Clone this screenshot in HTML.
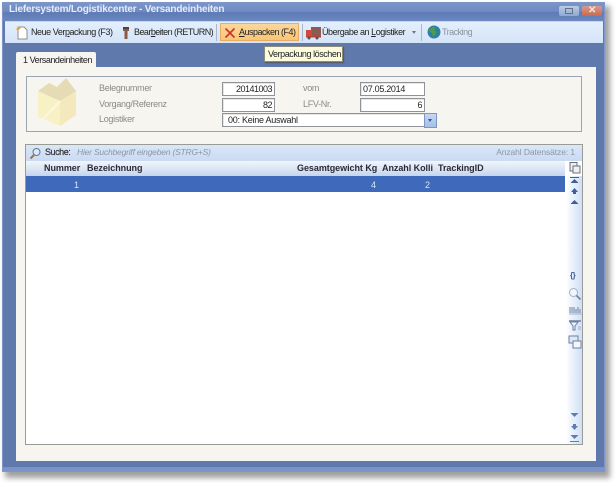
<!DOCTYPE html>
<html><head><meta charset="utf-8"><style>
html,body{margin:0;padding:0;background:#fff}
body{width:616px;height:484px;position:relative;overflow:hidden;font-family:"Liberation Sans",sans-serif;font-size:9px;color:#222}
div,span,svg{position:absolute;box-sizing:border-box}
.t{white-space:nowrap;line-height:12px;filter:blur(.3px);letter-spacing:-.45px}
.l{color:#8a8a86;letter-spacing:-.3px}
.f{background:#fff;border:1px solid #8f9399;box-shadow:inset 1px 1px 0 #e6e6e6;height:14px;line-height:12px;padding:0 2px;font-size:9px;filter:blur(.25px);letter-spacing:-.5px}
.h{font-weight:bold;color:#2a2a35;letter-spacing:-.05px}
.w{color:#dbe6f7}
</style></head><body>
<div style="left:5px;top:6px;width:605px;height:472px;background:#777;filter:blur(3px);opacity:.7"></div>
<div style="left:2px;top:2px;width:603px;height:470px;background:#5f79ad;border:1px solid #7f97c8"></div>
<div style="left:3px;top:3px;width:601px;height:18px;background:linear-gradient(#7b95ca,#6f8bc2 45%,#5e7bb6 55%,#6d88c0)"></div>
<div style="left:3px;top:467px;width:601px;height:4px;background:#7a93c8"></div>
<div class="t" style="left:9px;top:4px;color:#e6ecf8;font-size:10px;font-weight:bold;letter-spacing:-.2px">Liefersystem/Logistikcenter - Versandeinheiten</div>
<div style="left:559px;top:6px;width:20px;height:10px;background:linear-gradient(#b9cbe6,#8fa9d2);border-radius:2px"></div>
<div style="left:565px;top:8px;width:8px;height:6px;border:1px solid #6a7080"></div>
<div style="left:582px;top:6px;width:20px;height:10px;background:linear-gradient(#d99a8a,#c9694f);border-radius:2px"></div>
<div class="t" style="left:588px;top:5px;color:#f3e3dd;font-weight:bold;font-size:10px">✕</div>

<div style="left:5px;top:21px;width:598px;height:22px;background:linear-gradient(#e4effc,#d4e4f8);border-top:1px solid #c4d6ef"></div>
<svg style="left:16px;top:26px" width="12" height="14" viewBox="0 0 12 14"><path d="M2 1H8L11 4V13H2Z" fill="#fff" stroke="#8f8f88"/><path d="M1 4L4 1" stroke="#e8a33a" stroke-width="2.500"/></svg>
<div class="t" style="left:31px;top:26px">Neue Ver<u>p</u>ackung (F3)</div>
<svg style="left:120px;top:26px" width="12" height="14" viewBox="0 0 12 14"><path d="M3 1H9V5H7.500V13H4.500V5H3Z" fill="#8a5a42"/><path d="M3 1H9V3H3Z" fill="#444"/></svg>
<div class="t" style="left:134px;top:26px;letter-spacing:-.55px">Bear<u>b</u>eiten (RETURN)</div>
<div style="left:216px;top:24px;width:1px;height:17px;background:#a9b8cc"></div>
<div style="left:220px;top:23px;width:79px;height:18px;background:linear-gradient(#fbd79c,#f9c578);border:1px solid #e8ad62"></div>
<svg style="left:224px;top:27px" width="12" height="12" viewBox="0 0 12 12"><path d="M1.500 1.500L10.500 10.500M10.500 1.500L1.500 10.500" stroke="#c8352a" stroke-width="1.600"/></svg>
<div class="t" style="left:239px;top:26px;letter-spacing:-.5px"><u>A</u>uspacken (F4)</div>
<div style="left:302px;top:24px;width:1px;height:17px;background:#a9b8cc"></div>
<svg style="left:306px;top:26px" width="15" height="14" viewBox="0 0 15 14"><path d="M5 1H15V10H5Z" fill="#8a5a55"/><path d="M0 4H6V11H0Z" fill="#cf4a3a"/><path d="M0 10H15V11.500H0Z" fill="#c2402f"/><circle cx="3" cy="12" r="1.500" fill="#555"/><circle cx="11" cy="12" r="1.500" fill="#555"/></svg>
<div class="t" style="left:322px;top:26px">Übergabe an <u>L</u>ogistiker</div>
<div style="left:412px;top:31px;border:2.500px solid transparent;border-top:3px solid #6b7585"></div>
<div style="left:421px;top:24px;width:1px;height:17px;background:#a9b8cc"></div>
<svg style="left:427px;top:25px" width="14" height="14" viewBox="0 0 13 13"><circle cx="6.500" cy="6.500" r="6" fill="#2c7fa8"/><path d="M2 4Q5 1 8 2L7 5L9 7L6 11L4 7L2 6Z" fill="#4f9a4a"/></svg>
<div class="t" style="left:442px;top:26px;color:#8b939f;letter-spacing:-.5px">Tracking</div>

<div style="left:16px;top:67px;width:580px;height:394px;background:#f7f5f0"></div>
<div style="left:16px;top:52px;width:80px;height:16px;background:#f7f5f0;border-radius:2px 2px 0 0"></div>
<div class="t" style="left:23px;top:54px">1 Versandeinheiten</div>
<div style="left:264px;top:46px;width:79px;height:16px;background:#fdfbdc;border:1px solid #8c8c78;box-shadow:1px 1px 1px #555"></div>
<div class="t" style="left:268px;top:48px">Verpackung löschen</div>

<div style="left:26px;top:76px;width:556px;height:56px;border:1px solid #9aa3b0"></div>
<svg style="left:35px;top:77px" width="45" height="50" viewBox="0 0 45 50"><path d="M3 14L25 24V49L3 40Z" fill="#f8f1c6"/><path d="M25 24L41 14V38L25 49Z" fill="#f3e9bd"/><path d="M3 14L14 6L22 10L31 1L41 14L25 24Z" fill="#e5dbb4"/><path d="M8 42L25 24" stroke="#fcf7de" stroke-width="2"/></svg>
<div class="t l" style="left:99px;top:82px">Belegnummer</div>
<div class="t l" style="left:99px;top:98px">Vorgang/Referenz</div>
<div class="t l" style="left:99px;top:113px">Logistiker</div>
<div class="f" style="left:222px;top:82px;width:53px;text-align:right">20141003</div>
<div class="f" style="left:222px;top:98px;width:53px;text-align:right">82</div>
<div class="t l" style="left:303px;top:82px">vom</div>
<div class="t l" style="left:303px;top:98px">LFV-Nr.</div>
<div class="f" style="left:360px;top:82px;width:65px;letter-spacing:-.3px">07.05.2014</div>
<div class="f" style="left:360px;top:98px;width:65px;text-align:right">6</div>
<div class="f" style="left:222px;top:113px;width:203px;padding-left:5px;letter-spacing:-.25px">00: Keine Auswahl</div>
<div style="left:424px;top:113px;width:13px;height:15px;background:linear-gradient(#c6d7f2,#a4bfe8);border:1px solid #7f97c0"></div>
<div style="left:428px;top:119px;border:2.500px solid transparent;border-top:3px solid #33558f"></div>

<div style="left:25px;top:144px;width:558px;height:301px;background:#fff;border:1px solid #9a9a96"></div>
<div style="left:26px;top:145px;width:556px;height:16px;background:linear-gradient(#dbe7f7,#c9daf3)"></div>
<svg style="left:29px;top:147px" width="13" height="13" viewBox="0 0 13 13"><circle cx="7.500" cy="5" r="3.500" fill="#dfe8f5" stroke="#5f7895"/><path d="M5 8L1.500 11.500" stroke="#a8732c" stroke-width="2"/></svg>
<div class="t" style="left:45px;top:146px;color:#333;-webkit-text-stroke:.2px #333">Suche:</div>
<div class="t" style="left:77px;top:146px;color:#8c96a6;font-style:italic;font-size:8.500px;letter-spacing:-.2px">Hier Suchbegriff eingeben (STRG+S)</div>
<div class="t" style="right:41px;top:146px;color:#8c96a6;font-size:8.500px;letter-spacing:-.1px">Anzahl Datensätze: 1</div>

<div style="left:26px;top:161px;width:539px;height:15px;background:linear-gradient(#f2f6fc,#c5d5ee)"></div>
<div class="t h" style="left:44px;top:162px">Nummer</div>
<div class="t h" style="left:87px;top:162px">Bezeichnung</div>
<div class="t h" style="left:297px;top:162px">Gesamtgewicht Kg</div>
<div class="t h" style="left:382px;top:162px">Anzahl Kolli</div>
<div class="t h" style="left:438px;top:162px">TrackingID</div>
<div style="left:26px;top:176px;width:539px;height:16px;background:#3f69bb"></div>
<div class="t w" style="left:74px;top:179px">1</div>
<div class="t w" style="left:371px;top:179px">4</div>
<div class="t w" style="left:425px;top:179px">2</div>

<div style="left:567px;top:176px;width:15px;height:268px;background:linear-gradient(90deg,#fafcff,#cfdff5)"></div>
<svg style="left:568px;top:161px" width="14" height="14" viewBox="0 0 14 14" fill="#eef0f3" stroke="#6b7078"><path d="M2 1.500H9V10H2Z"/><path d="M5 5H12V12H5Z"/></svg>
<svg style="left:569px;top:176px" width="11" height="48" viewBox="0 0 11 48" fill="#3f5f96"><path d="M1 1H10V2H1ZM5.500 3L9.500 7H1.500Z"/><path d="M5.500 12L9 16H7V18H4V16H2Z"/><path d="M5.500 24L9.500 28H1.500Z"/></svg>
<div class="t" style="left:570px;top:270px;color:#3f5f96;font-size:8px;font-weight:bold">{}</div>
<svg style="left:568px;top:287px" width="14" height="14" viewBox="0 0 14 14" fill="none"><circle cx="5.500" cy="5.500" r="4" stroke="#9fb0c9" fill="#f3f7fc"/><path d="M8.500 8.500L12.500 12.500" stroke="#6f84a8" stroke-width="1.800"/></svg>
<svg style="left:569px;top:305px" width="13" height="10" viewBox="0 0 13 10"><path d="M1 2V8M3 2V8M5 2V8M7 4V8M9 2V8M11 4V8" stroke="#6c80a2"/><path d="M0 9H13" stroke="#9fb0c9"/></svg>
<svg style="left:568px;top:320px" width="14" height="11" viewBox="0 0 14 11"><path d="M1 1H13" stroke="#6c80a2" stroke-width="1.500"/><path d="M2 2H10L7 6V10H5V6Z" fill="#eef3fa" stroke="#6c80a2"/><path d="M10 7H13M10 9H13" stroke="#9fb0c9"/></svg>
<svg style="left:568px;top:335px" width="14" height="14" viewBox="0 0 14 14"><path d="M1 1H10V8H1Z" fill="#dfe8f5" stroke="#6c80a2"/><path d="M5 6H13V13H5Z" fill="#f3f7fc" stroke="#6c80a2"/></svg>
<svg style="left:569px;top:412px" width="11" height="32" viewBox="0 0 11 32" fill="#5f7db5"><path d="M1.500 1H9.500L5.500 5Z"/><path d="M4 12H7V14H9L5.500 18L2 14H4Z"/><path d="M1.500 23H9.500L5.500 27ZM1 29H10V30H1Z"/></svg>
</body></html>
